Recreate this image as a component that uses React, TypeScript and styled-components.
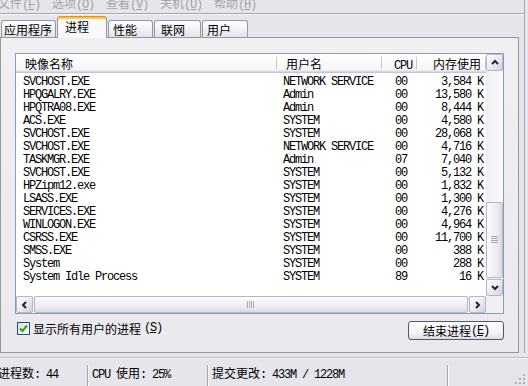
import React from "react";
import styled, { createGlobalStyle } from "styled-components";

const GlobalStyle = createGlobalStyle`
  html, body {
    margin: 0;
    padding: 0;
    background: #e5e5eb;
    overflow: hidden;
  }
  body {
    font-family: "Noto Sans CJK SC", "Liberation Sans", sans-serif;
    font-size: 12px;
    color: #000;
  }
`;

const rows = [
  ["SVCHOST.EXE", "NETWORK SERVICE", "00", "3,584 K"],
  ["HPQGALRY.EXE", "Admin", "00", "13,580 K"],
  ["HPQTRA08.EXE", "Admin", "00", "8,444 K"],
  ["ACS.EXE", "SYSTEM", "00", "4,580 K"],
  ["SVCHOST.EXE", "SYSTEM", "00", "28,068 K"],
  ["SVCHOST.EXE", "NETWORK SERVICE", "00", "4,716 K"],
  ["TASKMGR.EXE", "Admin", "07", "7,040 K"],
  ["SVCHOST.EXE", "SYSTEM", "00", "5,132 K"],
  ["HPZipm12.exe", "SYSTEM", "00", "1,832 K"],
  ["LSASS.EXE", "SYSTEM", "00", "1,300 K"],
  ["SERVICES.EXE", "SYSTEM", "00", "4,276 K"],
  ["WINLOGON.EXE", "SYSTEM", "00", "4,964 K"],
  ["CSRSS.EXE", "SYSTEM", "00", "11,700 K"],
  ["SMSS.EXE", "SYSTEM", "00", "388 K"],
  ["System", "SYSTEM", "00", "288 K"],
  ["System Idle Process", "SYSTEM", "89", "16 K"]
];

const menus = [
  ["文件", "F"],
  ["选项", "O"],
  ["查看", "V"],
  ["关机", "U"],
  ["帮助", "H"]
];

const tabs = [
  { label: "应用程序", w: 55, pad: 2 },
  { label: "进程", w: 50, pad: 7, active: true },
  { label: "性能", w: 45, pad: 4 },
  { label: "联网", w: 47, pad: 6 },
  { label: "用户", w: 46, pad: 4 }
];

const COLS = "261px 105px 35px 69px";

const Mono = styled.span`
  font-family: "Liberation Mono", "DejaVu Sans Mono", monospace;
  font-size: 12px;
  letter-spacing: -1.2px;
  white-space: pre;
`;

const Han = styled.span`
  font-family: "Noto Sans CJK SC", sans-serif;
  font-size: 12px;
`;

const HAN_RE = /[\u2E80-\u9FFF\uFF00-\uFFEF]/;

const Mixed = ({ text }: { text: string }) => (
  <>
    {text
      .split(/([\u2E80-\u9FFF\uFF00-\uFFEF]+)/)
      .filter(Boolean)
      .map((p, i) =>
        HAN_RE.test(p) ? <Han key={i}>{p}</Han> : <Mono key={i}>{p}</Mono>
      )}
  </>
);

const Hot = ({ label, k }: { label: string; k: string }) => (
  <>
    <Han>{label}</Han>
    <Mono>
      (<u>{k}</u>)
    </Mono>
  </>
);

const Frame = styled.div`
  width: 528px;
  height: 386px;
  display: flex;
  flex-direction: column;
  overflow: hidden;
`;

const Upper = styled.div`
  width: 524px;
  border-right: 1px solid #a9a9b2;
`;

const MenuBar = styled.div`
  height: 13px;
  overflow: hidden;
  border-bottom: 1px solid #a6a6ae;
  display: flex;
  gap: 12px;
`;

const MenuItem = styled.span<{ $first?: boolean }>`
  display: block;
  width: 42px;
  white-space: nowrap;
  line-height: 12px;
  margin-top: -3px;
  margin-left: ${(p) => (p.$first ? "-2px" : "0")};
  color: #a3a3ab;
`;

const TabStrip = styled.div`
  height: 24px;
  margin-bottom: -1px;
  display: flex;
  align-items: flex-end;
  gap: 1px;
  padding-left: 1px;
  position: relative;
  z-index: 1;
  box-shadow: inset 0 1px 0 #f7f7fa;
`;

const Tab = styled.div<{ $active?: boolean; $w: number; $pad: number }>`
  box-sizing: border-box;
  width: ${(p) => p.$w}px;
  height: ${(p) => (p.$active ? 22 : 17)}px;
  margin-bottom: ${(p) => (p.$active ? 0 : 1)}px;
  border: 1px solid #919b9c;
  border-bottom: none;
  border-radius: 3px 3px 0 0;
  padding-left: ${(p) => p.$pad}px;
  padding-top: ${(p) => (p.$active ? 3 : 2)}px;
  line-height: 14px;
  white-space: nowrap;
  overflow: hidden;
  background: ${(p) =>
    p.$active ? "#f9f9fb" : "linear-gradient(#ffffff, #f2f2f5 55%, #e2e2e9)"};
  ${(p) =>
    p.$active &&
    `border-top: 1px solid #e68b2c; box-shadow: inset 0 2px 0 #ffc73c;`}
`;

const Panel = styled.div`
  box-sizing: border-box;
  width: 519px;
  border: 1px solid #919b9c;
  background: linear-gradient(#f0f0f3, #e9e9ee);
  padding: 15px 14px 12px 14px;
`;

const ListBox = styled.div`
  box-sizing: border-box;
  width: 489px;
  border: 1px solid #8a9bb5;
  background: #fff;
  display: flex;
  flex-direction: column;
`;

const ListMain = styled.div`
  display: flex;
  height: 242px;
`;

const ListContent = styled.div`
  width: 470px;
  overflow: hidden;
`;

const HeaderRow = styled.div`
  display: grid;
  grid-template-columns: ${COLS};
  height: 19px;
  box-sizing: border-box;
  background: linear-gradient(#ffffff, #f4f4f7);
  box-shadow: inset 0 -1px 0 #c5c5d3, inset 0 -2px 0 #d9d9e2,
    inset 0 -3px 0 #e8e8ee;
`;

const HeaderCell = styled.div<{ $right?: boolean; $pad: number }>`
  text-align: ${(p) => (p.$right ? "right" : "left")};
  padding: ${(p) => (p.$right ? `3px ${p.$pad}px 0 0` : `3px 0 0 ${p.$pad}px`)};
  line-height: 13px;
  white-space: nowrap;
  background: linear-gradient(#c5c5cd, #c5c5cd) right 3px / 1px 12px no-repeat;
`;

const Rows = styled.div`
  padding-top: 3px;
`;

const Row = styled.div`
  display: grid;
  grid-template-columns: ${COLS};
  height: 13px;
  line-height: 13px;
`;

const Cell = styled(Mono)<{ $right?: boolean; $pad: number }>`
  display: block;
  overflow: hidden;
  text-align: ${(p) => (p.$right ? "right" : "left")};
  padding: ${(p) => (p.$right ? `0 ${p.$pad}px 0 0` : `0 0 0 ${p.$pad}px`)};
`;

const VScroll = styled.div`
  width: 17px;
  display: flex;
  flex-direction: column;
  background: linear-gradient(90deg, #eeeef2, #fbfbfc);
`;

const HScrollRow = styled.div`
  display: flex;
  height: 17px;
`;

const HScroll = styled.div`
  width: 470px;
  display: flex;
  background: linear-gradient(#eeeef2, #fbfbfc);
`;

const Corner = styled.div`
  width: 17px;
  background: #f0f0f3;
`;

const ScrollBtn = styled.div`
  box-sizing: border-box;
  width: 17px;
  height: 17px;
  flex: none;
  border: 1px solid #b4b7c8;
  border-radius: 2px;
  background: linear-gradient(135deg, #ffffff, #e7e7ee 60%, #cfd0da);
  display: flex;
  align-items: center;
  justify-content: center;
`;

const VTrack = styled.div`
  flex: 1;
  display: flex;
  flex-direction: column;
  justify-content: flex-end;
`;

const HTrack = styled.div`
  flex: 1;
  display: flex;
  padding: 0 1px;
`;

const Thumb = styled.div<{ $size?: number }>`
  box-sizing: border-box;
  ${(p) => (p.$size ? `height: ${p.$size}px; margin-bottom: 1px;` : "flex: 1;")}
  border: 1px solid #b4b7c8;
  border-radius: 2px;
  background: linear-gradient(
    ${(p) => (p.$size ? "90deg" : "180deg")},
    #fdfdfe,
    #eaeaf0 70%,
    #d8d9e2
  );
  display: flex;
  align-items: center;
  justify-content: center;
`;

const Footer = styled.div`
  margin-top: 7px;
  height: 19px;
  display: flex;
  justify-content: space-between;
  padding-left: 2px;
`;

const CheckLabel = styled.label`
  display: flex;
  align-items: center;
  gap: 3px;
  margin-top: 1px;
  height: 13px;
  line-height: 13px;
  white-space: nowrap;
`;

const CheckBox = styled.span`
  box-sizing: border-box;
  width: 13px;
  height: 13px;
  border: 1px solid #1c5180;
  background: linear-gradient(135deg, #dcdcd7, #ffffff);
  display: flex;
  align-items: center;
  justify-content: center;
`;

const Button = styled.div`
  box-sizing: border-box;
  width: 96px;
  height: 19px;
  border: 1px solid #4b5a76;
  border-radius: 3px;
  background: linear-gradient(#ffffff, #f1f1f4 70%, #dcdce3);
  display: flex;
  align-items: center;
  justify-content: center;
  line-height: 14px;
  white-space: nowrap;
`;

const StatusBar = styled.div`
  margin-top: 4px;
  border-top: 1px solid #b8b8c0;
  box-shadow: inset 0 1px 0 #f8f8fa;
  padding-top: 7px;
  flex: 1;
  display: flex;
  align-items: stretch;
  margin-left: -6px;
`;

const Pane = styled.div<{ $w?: number; $last?: boolean }>`
  ${(p) => (p.$w ? `width: ${p.$w}px;` : "flex: 1;")}
  flex-shrink: 0;
  padding-left: 4px;
  line-height: 15px;
  white-space: nowrap;
  ${(p) =>
    !p.$last && `border-right: 1px solid #a7a7b0; box-shadow: 1px 0 0 #ffffff;`}
`;

const Grip = styled.div`
  width: 14px;
  display: flex;
  align-items: flex-end;
  padding-bottom: 1px;
`;

const Chevron = ({ dir }: { dir: "up" | "down" | "left" | "right" }) => {
  const pts = {
    up: "1,5 4,2 7,5",
    down: "1,2 4,5 7,2",
    left: "5,1 2,4 5,7",
    right: "2,1 5,4 2,7"
  }[dir];
  return (
    <svg width="8" height="8" viewBox="0 0 8 8">
      <polyline points={pts} fill="none" stroke="#1e2433" strokeWidth="2" />
    </svg>
  );
};

const GripLines = ({ vertical }: { vertical?: boolean }) =>
  vertical ? (
    <svg width="8" height="7" viewBox="0 0 8 7">
      {[0, 2, 4, 6].map((x) => (
        <rect key={x} x={x} y="0" width="1" height="7" fill="#a9abba" />
      ))}
    </svg>
  ) : (
    <svg width="7" height="8" viewBox="0 0 7 8">
      {[1, 3, 5, 7].map((y) => (
        <rect key={y} x="0" y={y - 1} width="7" height="1" fill="#a9abba" />
      ))}
    </svg>
  );

const App: React.FC = () => (
  <Frame>
    <GlobalStyle />
    <Upper>
      <MenuBar>
        {menus.map(([l, k], i) => (
          <MenuItem key={l} $first={i === 0}>
            <Hot label={l} k={k} />
          </MenuItem>
        ))}
      </MenuBar>
      <TabStrip>
        {tabs.map((t) => (
          <Tab key={t.label} $w={t.w} $pad={t.pad} $active={t.active}>
            {t.label}
          </Tab>
        ))}
      </TabStrip>
      <Panel>
        <ListBox>
          <ListMain>
            <ListContent>
              <HeaderRow>
                <HeaderCell $pad={9}>映像名称</HeaderCell>
                <HeaderCell $pad={9}>用户名</HeaderCell>
                <HeaderCell $right $pad={5}>
                  <Mono>CPU</Mono>
                </HeaderCell>
                <HeaderCell $right $pad={5}>
                  内存使用
                </HeaderCell>
              </HeaderRow>
              <Rows>
                {rows.map((r, i) => (
                  <Row key={i}>
                    <Cell $pad={7}>{r[0]}</Cell>
                    <Cell $pad={6}>{r[1]}</Cell>
                    <Cell $right $pad={10}>
                      {r[2]}
                    </Cell>
                    <Cell $right $pad={3}>
                      {r[3]}
                    </Cell>
                  </Row>
                ))}
              </Rows>
            </ListContent>
            <VScroll>
              <ScrollBtn>
                <Chevron dir="up" />
              </ScrollBtn>
              <VTrack>
                <Thumb $size={76}>
                  <GripLines />
                </Thumb>
              </VTrack>
              <ScrollBtn>
                <Chevron dir="down" />
              </ScrollBtn>
            </VScroll>
          </ListMain>
          <HScrollRow>
            <HScroll>
              <ScrollBtn>
                <Chevron dir="left" />
              </ScrollBtn>
              <HTrack>
                <Thumb>
                  <GripLines vertical />
                </Thumb>
              </HTrack>
              <ScrollBtn>
                <Chevron dir="right" />
              </ScrollBtn>
            </HScroll>
            <Corner />
          </HScrollRow>
        </ListBox>
        <Footer>
          <CheckLabel>
            <CheckBox>
              <svg width="9" height="9" viewBox="0 0 9 9">
                <polyline
                  points="1,4.5 3.5,7 8,1.5"
                  fill="none"
                  stroke="#21a121"
                  strokeWidth="2"
                />
              </svg>
            </CheckBox>
            <Hot label="显示所有用户的进程" k="S" />
          </CheckLabel>
          <Button>
            <Hot label="结束进程" k="E" />
          </Button>
        </Footer>
      </Panel>
    </Upper>
    <StatusBar>
      <Pane $w={89}>
        <Mixed text="进程数: 44" />
      </Pane>
      <Pane $w={115}>
        <Mixed text="CPU 使用: 25%" />
      </Pane>
      <Pane $w={235}>
        <Mixed text="提交更改: 433M / 1228M" />
      </Pane>
      <Pane $last />
      <Grip>
        <svg width="12" height="12" viewBox="0 0 12 12">
          {[
            [9, 1],
            [9, 5],
            [5, 5],
            [9, 9],
            [5, 9],
            [1, 9]
          ].map(([x, y]) => (
            <rect key={`${x}-${y}`} x={x} y={y} width="2" height="2" fill="#b0b0b8" />
          ))}
        </svg>
      </Grip>
    </StatusBar>
  </Frame>
);

export default App;
